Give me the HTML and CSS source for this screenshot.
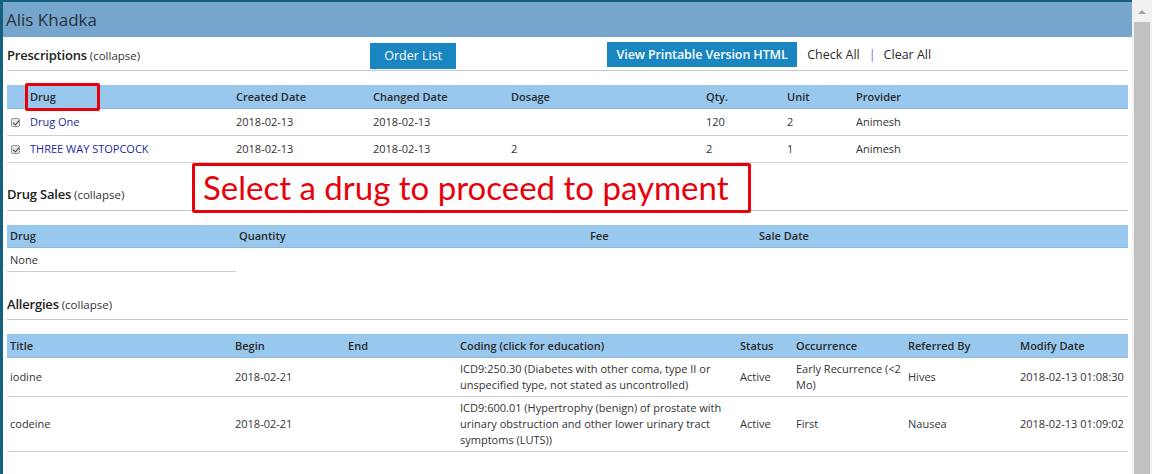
FILE: index.html
```html
<!DOCTYPE html>
<html>
<head>
<meta charset="utf-8">
<title>Alis Khadka</title>
<link rel="stylesheet" href="styles.css">
</head>
<body>
<div class="window">
  <div class="main">
    <div class="titlebar">Alis Khadka</div>
    <div class="content">
      <div class="section-head first">
        <div class="sh-title"><span class="sh-name">Prescriptions</span> <span class="sh-toggle">(collapse)</span></div>
        <div class="sh-tools">
          <a class="btn btn-order">Order List</a>
          <a class="btn btn-print">View Printable Version HTML</a>
          <span class="links"><a>Check All</a><span class="sep">|</span><a>Clear All</a></span>
        </div>
      </div>

      <table class="grid rx">
        <colgroup>
          <col style="width:19px"><col style="width:206px"><col style="width:137px"><col style="width:138px"><col style="width:195px"><col style="width:81px"><col style="width:69px"><col>
        </colgroup>
        <thead>
          <tr><th></th><th>Drug</th><th>Created Date</th><th>Changed Date</th><th>Dosage</th><th>Qty.</th><th>Unit</th><th>Provider</th></tr>
        </thead>
        <tbody>
          <tr><td><span class="check"></span></td><td><a class="drug">Drug One</a></td><td>2018-02-13</td><td>2018-02-13</td><td></td><td>120</td><td>2</td><td>Animesh</td></tr>
          <tr><td><span class="check"></span></td><td><a class="drug">THREE WAY STOPCOCK</a></td><td>2018-02-13</td><td>2018-02-13</td><td>2</td><td>2</td><td>1</td><td>Animesh</td></tr>
        </tbody>
      </table>

      <div class="section-head">
        <div class="sh-title"><span class="sh-name">Drug Sales</span> <span class="sh-toggle">(collapse)</span></div>
      </div>
      <table class="grid sales">
        <colgroup>
          <col style="width:229px"><col style="width:351px"><col style="width:169px"><col>
        </colgroup>
        <thead>
          <tr><th>Drug</th><th>Quantity</th><th>Fee</th><th>Sale Date</th></tr>
        </thead>
        <tbody>
          <tr><td class="none">None</td><td class="blank"></td><td class="blank"></td><td class="blank"></td></tr>
        </tbody>
      </table>

      <div class="section-head">
        <div class="sh-title"><span class="sh-name">Allergies</span> <span class="sh-toggle">(collapse)</span></div>
      </div>
      <table class="grid allergy">
        <colgroup>
          <col style="width:225px"><col style="width:113px"><col style="width:112px"><col style="width:280px"><col style="width:56px"><col style="width:112px"><col style="width:112px"><col>
        </colgroup>
        <thead>
          <tr><th>Title</th><th>Begin</th><th>End</th><th>Coding (click for education)</th><th>Status</th><th>Occurrence</th><th>Referred By</th><th>Modify Date</th></tr>
        </thead>
        <tbody>
          <tr><td>iodine</td><td>2018-02-21</td><td></td><td>ICD9:250.30 (Diabetes with other coma, type II or<br>unspecified type, not stated as uncontrolled)</td><td>Active</td><td>Early Recurrence (&lt;2<br>Mo)</td><td>Hives</td><td>2018-02-13 01:08:30</td></tr>
          <tr><td>codeine</td><td>2018-02-21</td><td></td><td>ICD9:600.01 (Hypertrophy (benign) of prostate with<br>urinary obstruction and other lower urinary tract<br>symptoms (LUTS))</td><td>Active</td><td>First</td><td>Nausea</td><td>2018-02-13 01:09:02</td></tr>
        </tbody>
      </table>
    </div>

    <div class="mark mark-drug"></div>
    <div class="mark mark-note">Select a drug to proceed to payment</div>
  </div>
  <div class="scrollbar">
    <div class="sb-arrow"></div>
    <div class="sb-thumb"></div>
  </div>
</div>
</body>
</html>
```

FILE: styles.css
```css
* { box-sizing: border-box; }
html, body { margin: 0; padding: 0; height: 100%; overflow: hidden; background: #fff; }
body { font-family: "Open Sans", "DejaVu Sans", sans-serif; color: #333; font-size: 11px; }

.window { display: flex; height: 474px; }
.main { position: relative; flex: 1; border-left: 3px solid #14607f; border-top: 2px solid #14607f; background: #fff; }
.titlebar { height: 35px; background: #76a6ce; font-size: 17px; line-height: 35px; padding-left: 3px; color: #2a3138; }
.content { padding: 0 4px 0 4px; }

.section-head { display: flex; align-items: center; height: 32px; margin-top: 16px; border-bottom: 1px solid #c6c6c6; }
.section-head.first { margin-top: 2px; }
.sh-name { font-size: 13px; font-weight: 600; color: #222; letter-spacing: -0.2px; }
.sh-toggle { font-size: 11.5px; color: #333; }
.sh-tools { display: grid; grid-template-columns: 237px auto auto; align-items: center; margin-left: 230px; }

.btn { display: inline-block; background: #1985c1; color: #fff; font-size: 12.5px; text-align: center; }
.btn-order { width: 86px; height: 26px; line-height: 26px; margin-top: 2px; }
.btn-print { width: 190px; height: 25px; line-height: 25px; font-weight: 600; letter-spacing: -0.1px; }
.links { margin-left: 10px; font-size: 12.5px; color: #2b2b2b; }
.links .sep { color: #7d6ad0; margin: 0 8px 0 9px; }

.grid { width: 100%; border-collapse: collapse; table-layout: fixed; margin-top: 14px; }
.grid th { background: #99c8ee; height: 23px; text-align: left; font-weight: 600; font-size: 11px; padding: 0 3px; color: #2a2a2a; border-bottom: 1px solid #8fb9db; }
.grid td { padding: 0 3px; font-size: 11px; color: #333; border-bottom: 1px solid #cfcfcf; vertical-align: middle; }
.rx th, .rx td { padding-left: 4px; }
.rx td { height: 27px; }
.drug { color: #1c2a9e; }
.check { display: inline-block; width: 9px; height: 9px; border: 1px solid #9a9a9a; border-radius: 2px; background: #e6e6e6; position: relative; top: 1px; }
.check::after { content: ""; position: absolute; left: 2px; top: 0px; width: 3px; height: 5px; border: solid #444; border-width: 0 1.5px 1.5px 0; transform: rotate(40deg); }

.sales td { height: 24px; }
.sales td.blank { border-bottom: none; }

.allergy td { line-height: 16px; padding-top: 3px; padding-bottom: 3px; }

.mark { position: absolute; border: 3px solid #e8000b; border-radius: 2px; }
.mark-drug { left: 22px; top: 81px; width: 75px; height: 28px; }
.mark-note { left: 189px; top: 161px; width: 559px; height: 50px; background: #fff; color: #e8000b; font-family: Lato, "Open Sans", sans-serif; font-size: 33px; line-height: 43px; padding-left: 8px; white-space: nowrap; }

.scrollbar { width: 20px; background: #f1f1f1; position: relative; }
.sb-arrow { position: absolute; left: 6px; top: 10px; width: 0; height: 0; border-left: 4px solid transparent; border-right: 4px solid transparent; border-bottom: 4px solid #a3a3a3; }
.sb-thumb { position: absolute; left: 2px; right: 2px; top: 22px; bottom: 0; background: #c1c1c1; }
```
